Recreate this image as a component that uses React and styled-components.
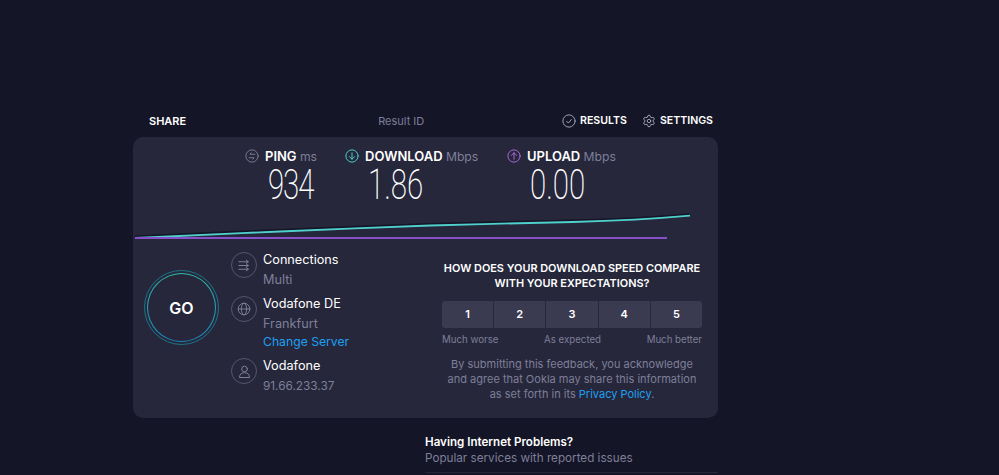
import React from "react"
import styled, { createGlobalStyle } from "styled-components"
import { Settings } from "lucide-react"

const GlobalStyle = createGlobalStyle`
  * {
    box-sizing: border-box;
  }
  html, body {
    margin: 0;
    height: 475px;
    overflow: hidden;
    background: #141526;
    font-family: Inter, "Open Sans", sans-serif;
  }
`

const Page = styled.div`
  width: 585px;
  margin-left: 133px;
  padding-top: 109px;
`

const TopBar = styled.div`
  display: flex;
  align-items: center;
  height: 23px;
  margin-bottom: 5px;
  padding: 0 5px 0 16px;
  color: #fff;
  font-size: 11px;
  font-weight: 600;
`

const ResultId = styled.span`
  margin-left: 192px;
  color: #7e7f99;
  font-weight: 400;
`

const TopLinks = styled.div`
  display: flex;
  align-items: center;
  gap: 15px;
  margin-left: auto;
  font-size: 10.6px;
`

const TopLink = styled.span`
  display: flex;
  align-items: center;
  gap: 4px;
`

const Card = styled.div`
  height: 281px;
  border-radius: 10px;
  background: #26273b;
`

const Metrics = styled.div`
  display: flex;
  padding: 10px 0 0 112px;
`

const Metric = styled.div`
  width: ${(p) => p.$width}px;
`

const MetricHead = styled.div`
  display: flex;
  align-items: center;
  gap: 6px;
  height: 18px;
  color: #fff;
  font-size: 13px;
  font-weight: 600;
`

const Unit = styled.span`
  color: #7e7f99;
  font-size: 12.2px;
  font-weight: 400;
`

const MetricValue = styled.div`
  margin: -2px 0 2px 23px;
  color: #fff;
  font-family: Roboto, sans-serif;
  font-size: 43px;
  font-weight: 200;
  letter-spacing: ${(p) => p.$spacing || 0}px;
  line-height: 42px;
  transform: scaleX(0.685);
  transform-origin: left center;
  white-space: nowrap;
`

const Graph = styled.svg`
  display: block;
  width: 585px;
  height: 35px;
  margin-top: -1px;
`

const Lower = styled.div`
  display: flex;
`

const GoColumn = styled.div`
  width: 98px;
  padding: 29px 0 0 11px;
`

const GoButton = styled.div`
  display: flex;
  align-items: center;
  justify-content: center;
  width: 69px;
  height: 69px;
  margin: 3px;
  border: 1.5px solid transparent;
  border-radius: 50%;
  background: linear-gradient(#26273b, #26273b) padding-box,
    linear-gradient(#2fbfa8, #1b86c4) border-box;
  outline: 1.5px solid #1b7688;
  outline-offset: 2px;
  color: #fff;
  font-size: 16px;
  font-weight: 600;
`

const Servers = styled.div`
  display: flex;
  flex-direction: column;
  gap: 4px;
  width: 193px;
  padding-top: 9px;
`

const ServerRow = styled.div`
  display: flex;
  gap: 6px;
`

const IconCircle = styled.div`
  display: flex;
  align-items: center;
  justify-content: center;
  flex: none;
  width: 26px;
  height: 26px;
  margin-top: 2px;
  border: 1px solid #55566c;
  border-radius: 50%;
  color: #7e7f99;
`

const ServerText = styled.div`
  color: #fff;
  font-size: 12.7px;
  line-height: 20px;
`

const Muted = styled.div`
  color: #7e7f99;
  font-size: ${(p) => p.$size || 12.7}px;
`

const Link = styled.span`
  color: #1ea0f2;
`

const ChangeServer = styled(Link)`
  display: block;
  margin-bottom: 2px;
  font-size: 12.2px;
  line-height: 16px;
`

const Survey = styled.div`
  width: 260px;
  margin-left: 18px;
  padding-top: 20px;
  text-align: center;
`

const SurveyTitle = styled.div`
  color: #fff;
  font-size: 10.9px;
  font-weight: 600;
  line-height: 15px;
  white-space: nowrap;
`

const Scale = styled.div`
  display: grid;
  grid-template-columns: repeat(5, 1fr);
  gap: 1px;
  margin-top: 10px;
  border-radius: 3px;
  overflow: hidden;
`

const ScaleButton = styled.div`
  height: 27px;
  background: #3a3b50;
  color: #fff;
  font-size: 11px;
  font-weight: 600;
  line-height: 27px;
`

const ScaleLabels = styled.div`
  display: flex;
  justify-content: space-between;
  margin-top: 5px;
  color: #7e7f99;
  font-size: 9.7px;
  line-height: 14px;
`

const Disclaimer = styled.div`
  margin-top: 10px;
  color: #7e7f99;
  font-size: 11px;
  line-height: 15px;
  white-space: nowrap;
`

const Below = styled.div`
  margin: 16px 0 0 292px;
  padding-bottom: 6px;
  border-bottom: 1px solid #26273b;
`

const BelowTitle = styled.div`
  color: #fff;
  font-size: 11.6px;
  font-weight: 600;
  line-height: 16px;
`

const BelowSub = styled.div`
  color: #7e7f99;
  font-size: 11.7px;
  line-height: 16px;
`

const Icon = ({ size = 16, color = "currentColor", children }) => (
  <svg width={size} height={size} viewBox="0 0 24 24" fill="none" stroke={color} strokeWidth="1.6" strokeLinecap="round" strokeLinejoin="round">
    {children}
  </svg>
)

const speedLine = "M2 32 C60 29 100 27.500 147 25.500 S250 21 297 19.500 S400 17 440 16 S520 13 557 9.700"

export default function App() {
  return (
    <Page>
      <GlobalStyle />
      <TopBar>
        <span>SHARE</span>
        <ResultId>Result ID</ResultId>
        <TopLinks>
          <TopLink>
            <Icon size={14} color="#a9aabb">
              <circle cx="12" cy="12" r="10.5" />
              <path d="M8 12.500l3 3 5-6" />
            </Icon>
            RESULTS
          </TopLink>
          <TopLink>
            <Settings size={14} color="#a9aabb" strokeWidth={1.6} />
            SETTINGS
          </TopLink>
        </TopLinks>
      </TopBar>
      <Card>
        <Metrics>
          <Metric $width={100}>
            <MetricHead>
              <Icon size={14} color="#7e7f99">
                <circle cx="12" cy="12" r="10.5" />
                <path d="M17 9H8.500l2-2.500M7 15h8.500l-2 2.500" />
              </Icon>
              <span>PING <Unit>ms</Unit></span>
            </MetricHead>
            <MetricValue $spacing={-1.6}>934</MetricValue>
          </Metric>
          <Metric $width={162}>
            <MetricHead>
              <Icon size={14} color="#4fd8d2">
                <circle cx="12" cy="12" r="10.5" />
                <path d="M12 6.500v11M7.500 13l4.500 4.500 4.500-4.500" />
              </Icon>
              <span>DOWNLOAD <Unit>Mbps</Unit></span>
            </MetricHead>
            <MetricValue>1.86</MetricValue>
          </Metric>
          <Metric $width={120}>
            <MetricHead>
              <Icon size={14} color="#b06ee0">
                <circle cx="12" cy="12" r="10.5" />
                <path d="M12 17.500v-11M7.500 11L12 6.500l4.500 4.500" />
              </Icon>
              <span>UPLOAD <Unit>Mbps</Unit></span>
            </MetricHead>
            <MetricValue>0.00</MetricValue>
          </Metric>
        </Metrics>
        <Graph viewBox="0 0 585 35">
          <path d={speedLine} fill="none" stroke="#141526" strokeWidth="2" transform="translate(0 -1.5)" />
          <path d={speedLine} fill="none" stroke="#4fd0cc" strokeWidth="1.8" />
          <path d="M2 32 H534" stroke="#8550c8" strokeWidth="2" />
        </Graph>
        <Lower>
          <GoColumn>
            <GoButton>GO</GoButton>
          </GoColumn>
          <Servers>
            <ServerRow>
              <IconCircle>
                <Icon size={15}>
                  <path d="M3 6h15M15 3.500L18 6l-3 2.500M3 12h15M15 9.500l3 2.500-3 2.500M3 18h15M15 15.500l3 2.500-3 2.500" />
                </Icon>
              </IconCircle>
              <ServerText>
                Connections
                <Muted>Multi</Muted>
              </ServerText>
            </ServerRow>
            <ServerRow>
              <IconCircle>
                <Icon size={14}>
                  <circle cx="12" cy="12" r="10" />
                  <ellipse cx="12" cy="12" rx="4.5" ry="10" />
                  <path d="M2 12h20" />
                </Icon>
              </IconCircle>
              <ServerText>
                Vodafone DE
                <Muted>Frankfurt</Muted>
                <ChangeServer>Change Server</ChangeServer>
              </ServerText>
            </ServerRow>
            <ServerRow>
              <IconCircle>
                <Icon size={15}>
                  <circle cx="12" cy="8" r="4.5" />
                  <path d="M4 21c0-4.500 3-7 8-7s8 2.500 8 7z" />
                </Icon>
              </IconCircle>
              <ServerText>
                Vodafone
                <Muted $size={11.8}>91.66.233.37</Muted>
              </ServerText>
            </ServerRow>
          </Servers>
          <Survey>
            <SurveyTitle>
              HOW DOES YOUR DOWNLOAD SPEED COMPARE
              <br />
              WITH YOUR EXPECTATIONS?
            </SurveyTitle>
            <Scale>
              {[1, 2, 3, 4, 5].map((n) => (
                <ScaleButton key={n}>{n}</ScaleButton>
              ))}
            </Scale>
            <ScaleLabels>
              <span>Much worse</span>
              <span>As expected</span>
              <span>Much better</span>
            </ScaleLabels>
            <Disclaimer>
              By submitting this feedback, you acknowledge
              <br />
              and agree that Ookla may share this information
              <br />
              as set forth in its <Link>Privacy Policy</Link>.
            </Disclaimer>
          </Survey>
        </Lower>
      </Card>
      <Below>
        <BelowTitle>Having Internet Problems?</BelowTitle>
        <BelowSub>Popular services with reported issues</BelowSub>
      </Below>
    </Page>
  )
}
